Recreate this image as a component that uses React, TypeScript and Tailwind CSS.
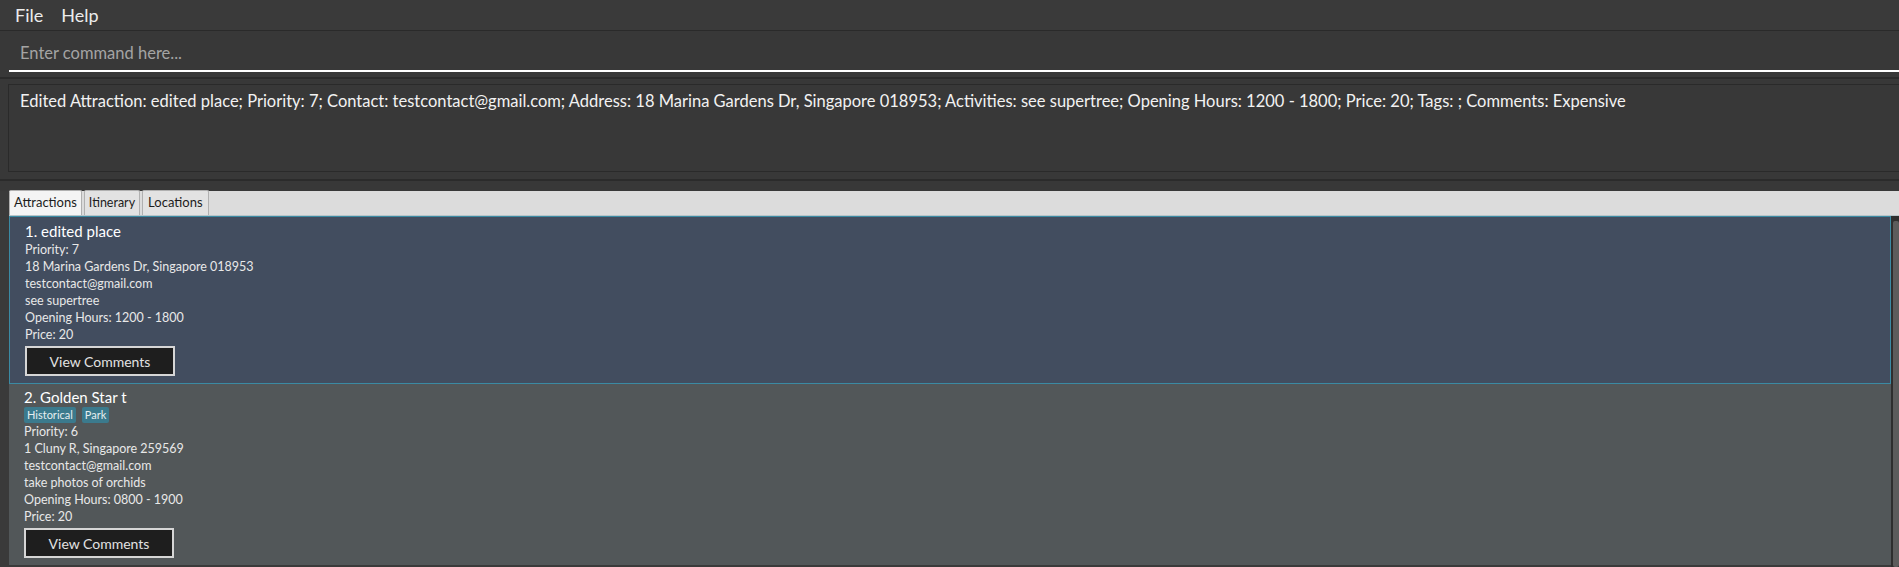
import React from "react";

type Attraction = {
  name: string;
  tags: string[];
  priority: number;
  address: string;
  contact: string;
  activities: string;
  hours: string;
  price: number;
};

const attractions: Attraction[] = [
  {
    name: "edited place",
    tags: [],
    priority: 7,
    address: "18 Marina Gardens Dr, Singapore 018953",
    contact: "testcontact@gmail.com",
    activities: "see supertree",
    hours: "1200 - 1800",
    price: 20,
  },
  {
    name: "Golden Star t",
    tags: ["Historical", "Park"],
    priority: 6,
    address: "1 Cluny R, Singapore 259569",
    contact: "testcontact@gmail.com",
    activities: "take photos of orchids",
    hours: "0800 - 1900",
    price: 20,
  },
];

function AttractionCard({
  index,
  item,
  selected,
}: {
  index: number;
  item: Attraction;
  selected: boolean;
}) {
  return (
    <div
      className={
        selected
          ? "h-[168px] bg-[#424d5f] border border-[#3b8aa3] pl-[15px] pt-[4px]"
          : "h-[181px] bg-[#525759] pl-[15px] pt-[3px]"
      }
    >
      <div className="text-[15px] leading-[20px] text-white">
        {index}. {item.name}
      </div>
      {item.tags.length > 0 && (
        <div className="flex gap-[6px] h-[16px]">
          {item.tags.map((t) => (
            <span
              key={t}
              className="bg-[#3b7a8d] text-[11px] leading-[16px] px-[3px] rounded-[2px] text-[#e6eef0]"
            >
              {t}
            </span>
          ))}
        </div>
      )}
      <div className="text-[12.5px] leading-[17px] text-[#e8e8e8]">
        <div>Priority: {item.priority}</div>
        <div>{item.address}</div>
        <div>{item.contact}</div>
        <div>{item.activities}</div>
        <div>Opening Hours: {item.hours}</div>
        <div>Price: {item.price}</div>
      </div>
      <button className="mt-[3px] w-[150px] h-[30px] border-2 border-[#d6d6d6] bg-[#1e1e1e] text-[14px] text-[#e2e2e2] flex items-center justify-center">
        View Comments
      </button>
    </div>
  );
}

export default function App() {
  const result =
    "Edited Attraction: edited place; Priority: 7; Contact: testcontact@gmail.com; Address: 18 Marina Gardens Dr, Singapore 018953; Activities: see supertree; Opening Hours: 1200 - 1800; Price: 20; Tags: ; Comments: Expensive";

  return (
    <div
      className="w-[1899px] h-[567px] overflow-hidden bg-[#3a3a3a] flex flex-col"
      style={{ fontFamily: "Lato, 'Open Sans', sans-serif" }}
    >
      {/* menu bar */}
      <div className="h-[31px] shrink-0 flex items-center pl-[15px] gap-[18px] border-b border-[#2a2a2a] text-[18px] text-[#ececec]">
        <span>File</span>
        <span>Help</span>
      </div>

      {/* command box */}
      <div className="h-[46px] shrink-0 pl-[9px] bg-[#383838]">
        <div className="h-[41px] border-b-2 border-white flex items-center pt-[6px] pl-[11px] text-[16.5px] text-[#a4a4a4]">
          Enter command here...
        </div>
      </div>

      {/* result display */}
      <div className="h-[102px] shrink-0 bg-[#383838] border-t-2 border-[#2b2b2b] pt-[5px] pl-[8px]">
        <div className="h-[88px] border border-r-0 border-[#2a2a2a] pl-[11px] pt-[5px] text-[16.5px] leading-[22px] text-[#f2f2f2] whitespace-nowrap">
          {result}
        </div>
      </div>

      <div className="h-[12px] shrink-0 bg-[#383838] border-t-2 border-[#2b2b2b]" />

      {/* tab pane */}
      <div className="flex-1 ml-[9px] flex flex-col min-h-0">
        <div className="h-[25px] shrink-0 bg-[#dcdcdc] flex gap-[2px] items-end border-b border-[#b8c4c8]">
          <div className="h-[25px] px-[4px] flex items-center bg-[#f4f4f4] border border-b-0 border-[#b0b0b0] rounded-t-[2px] text-[13px] text-[#1c1c1c]">
            Attractions
          </div>
          <div className="h-[25px] px-[4px] flex items-center bg-[#e2e2e2] border border-b-0 border-[#b0b0b0] rounded-t-[2px] text-[12.5px] text-[#1c1c1c]">
            Itinerary
          </div>
          <div className="h-[25px] px-[5px] flex items-center bg-[#e2e2e2] border border-b-0 border-[#b0b0b0] rounded-t-[2px] text-[13px] text-[#1c1c1c]">
            Locations
          </div>
        </div>
        <div className="flex-1 flex min-h-0">
          <div className="flex-1 flex flex-col">
            {attractions.map((a, i) => (
              <AttractionCard key={i} index={i + 1} item={a} selected={i === 0} />
            ))}
          </div>
          <div className="w-[8px] bg-[#2e2e2e] pt-[5px] pl-[2px]">
            <div className="h-full bg-[#5c5c5c] rounded-[2px]" />
          </div>
        </div>
      </div>
    </div>
  );
}
